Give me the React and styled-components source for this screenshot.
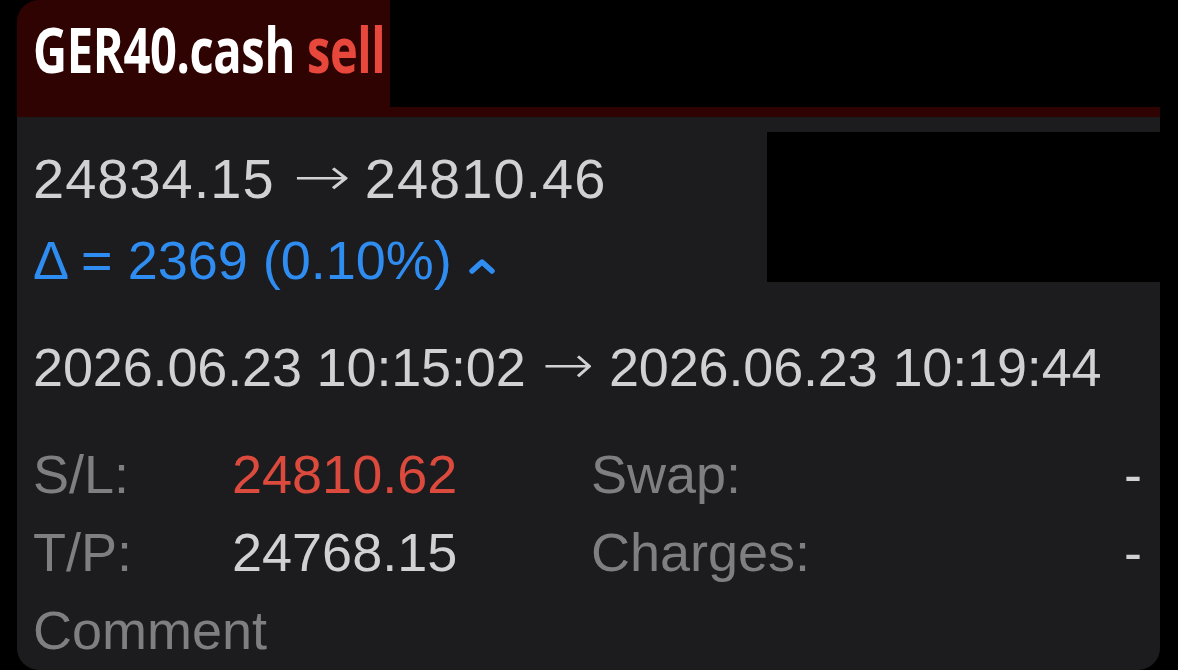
import React from 'react'
import styled, { createGlobalStyle } from 'styled-components'

const GlobalStyle = createGlobalStyle`
  html, body {
    margin: 0;
    padding: 0;
    background: #000;
  }
  body {
    font-family: 'Liberation Sans', Arial, sans-serif;
  }
`

const Page = styled.div`
  width: 1178px;
  height: 670px;
  overflow: hidden;
  background: #000;
  padding-left: 17px;
  box-sizing: border-box;
`

const Card = styled.div`
  width: 1143px;
  display: flex;
  flex-direction: column;
`

const TabRow = styled.div`
  display: flex;
`

const Tab = styled.div`
  width: 373px;
  height: 107px;
  padding-left: 16px;
  background: #300303;
  border-top-left-radius: 22px;
  display: flex;
  align-items: center;
  box-sizing: border-box;
  overflow: hidden;
`

const Title = styled.span`
  display: inline-block;
  white-space: nowrap;
  font-family: 'Open Sans', 'DejaVu Sans', sans-serif;
  font-weight: 700;
  font-size: 63px;
  letter-spacing: -0.5px;
  color: #fff;
  transform: scaleX(0.747);
  transform-origin: left center;
  margin-top: -10px;
`

const Side = styled.span`
  color: #e8473c;
  margin-left: 16px;
`

const Strip = styled.div`
  height: 10px;
  background: #300303;
`

const Body = styled.div`
  position: relative;
  height: 553px;
  background: #1c1c1e;
  border-radius: 0 0 22px 22px;
  padding: 23px 18px 0 16px;
  box-sizing: border-box;
  font-size: 54px;
  color: #d1d1d3;
`

const Redaction = styled.div`
  position: absolute;
  top: 15px;
  right: 0;
  width: 393px;
  height: 150px;
  background: #000;
`

const Line = styled.div`
  height: 78px;
  line-height: 78px;
  white-space: nowrap;
  margin-top: ${p => p.$gap || 0}px;
  color: ${p => p.$color || 'inherit'};
  font-size: ${p => p.$size || 54}px;
  letter-spacing: ${p => p.$track || 0}px;
  display: flex;
  align-items: center;
`

const Arrow = styled.span`
  display: inline-block;
  font-family: 'DejaVu Sans', sans-serif;
  font-weight: 200;
  font-size: 54px;
  letter-spacing: 0;
  margin: 0 ${p => p.$after}px 0 ${p => p.$before}px;
  transform: scaleX(${p => p.$stretch});
  transform-origin: left center;
  position: relative;
  top: -2px;
`

const Chevron = styled.svg`
  width: 28px;
  height: 20px;
  margin-left: 16px;
  margin-top: 12px;
`

const Stats = styled.div`
  margin-top: 29px;
  display: grid;
  grid-template-columns: 199px 359px 1fr auto;
  grid-auto-rows: 78px;
  line-height: 78px;
  white-space: nowrap;
`

const Label = styled.div`
  color: #7f7f82;
`

const Value = styled.div`
  color: ${p => p.$red ? '#dc4a3d' : '#d1d1d3'};
  text-align: ${p => p.$right ? 'right' : 'left'};
`

export default function App() {
  return (
    <Page>
      <GlobalStyle />
      <Card>
        <TabRow>
          <Tab>
            <Title>
              GER40.cash<Side>sell</Side>
            </Title>
          </Tab>
        </TabRow>
        <Strip />
        <Body>
          <Redaction />
          <Line $size={56} $track={1}>
            24834.15<Arrow $before={18} $after={27} $stretch={1.28}>→</Arrow>24810.46
          </Line>
          <Line $gap={3} $color="#2f8cf0">
            Δ = 2369 (0.10%)
            <Chevron viewBox="0 0 28 20">
              <polyline points="4,15 14,6 24,15" fill="none" stroke="#2f8cf0" strokeWidth="5.5" strokeLinecap="round" strokeLinejoin="round" />
            </Chevron>
          </Line>
          <Line $gap={29} $track={-0.15}>
            2026.06.23 10:15:02<Arrow $before={16} $after={22} $stretch={1.15}>→</Arrow>2026.06.23 10:19:44
          </Line>
          <Stats>
            <Label>S/L:</Label>
            <Value $red>24810.62</Value>
            <Label>Swap:</Label>
            <Value $right>-</Value>
            <Label>T/P:</Label>
            <Value>24768.15</Value>
            <Label>Charges:</Label>
            <Value $right>-</Value>
            <Label>Comment</Label>
          </Stats>
        </Body>
      </Card>
    </Page>
  )
}
